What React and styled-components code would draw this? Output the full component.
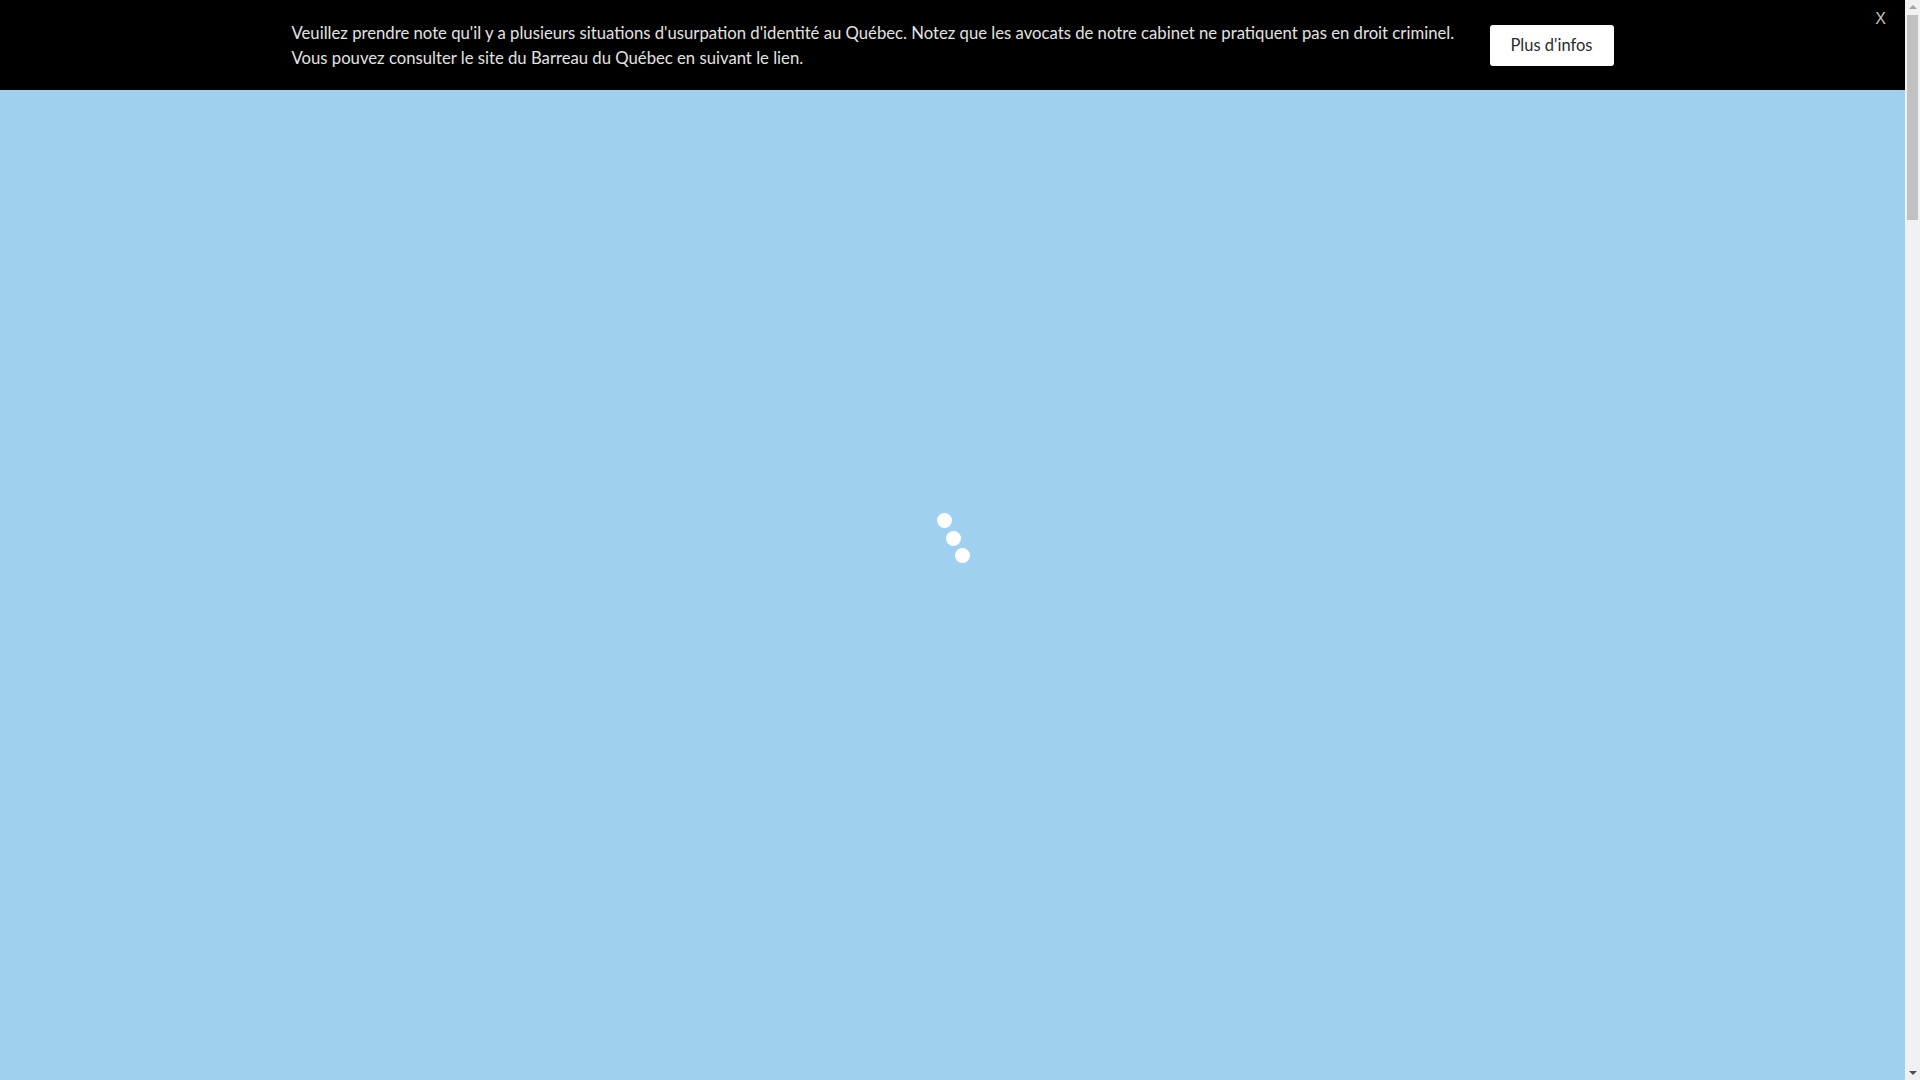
import styled, { createGlobalStyle } from 'styled-components';

const GlobalStyle = createGlobalStyle`
    html, body {
        margin: 0;
        padding: 0;
        overflow: hidden;
    }
    body {
        background-color: #a0d0ef;
        font-family: Lato, "Open Sans", "Liberation Sans", sans-serif;
    }
`;

export default function App() {
    return (
        <>
            <GlobalStyle />
            <Window>
                <Main>
                    <Banner>
                        <BannerInner>
                            <Notice>
                                Veuillez prendre note qu'il y a plusieurs situations d'usurpation d'identité au Québec. Notez que les avocats de notre cabinet ne pratiquent pas en droit criminel.
                                <br />
                                Vous pouvez consulter le site du Barreau du Québec en suivant le lien.
                            </Notice>
                            <InfoButton>Plus d'infos</InfoButton>
                        </BannerInner>
                        <CloseButton aria-label="Fermer">X</CloseButton>
                    </Banner>
                    <Content />
                    <Loader>
                        <Dot $shift={0} />
                        <Dot $shift={9} />
                        <Dot $shift={18} />
                    </Loader>
                </Main>
                <ScrollTrack>
                    <Arrow $up />
                    <Thumb />
                    <Spacer />
                    <Arrow />
                </ScrollTrack>
            </Window>
        </>
    );
}

const Window = styled.div`
    display: flex;
    height: 100vh;
`;

const Main = styled.div`
    position: relative;
    flex: 1;
    display: flex;
    flex-direction: column;
`;

const Banner = styled.header`
    position: relative;
    height: 90px;
    flex-shrink: 0;
    background-color: #000000;
    display: flex;
    justify-content: center;
    align-items: center;
`;

const BannerInner = styled.div`
    width: 1322px;
    display: flex;
    align-items: center;
    gap: 30px;
`;

const Notice = styled.p`
    flex: 1;
    min-width: 0;
    margin: 0;
    padding-top: 2px;
    font-size: 16.7px;
    font-weight: 400;
    line-height: 25px;
    color: #e2e2e2;
    white-space: nowrap;
`;

const InfoButton = styled.button`
    width: 124px;
    height: 41px;
    flex-shrink: 0;
    border: none;
    border-radius: 3px;
    background-color: #ffffff;
    color: #2b2b2b;
    font-family: inherit;
    font-size: 16.5px;
    cursor: pointer;
`;

const CloseButton = styled.button`
    position: absolute;
    top: 9px;
    right: 19px;
    border: none;
    background: none;
    padding: 0;
    color: #c4c4c4;
    font-family: "Liberation Sans", sans-serif;
    font-size: 16px;
    line-height: 20px;
    cursor: pointer;
`;

const Content = styled.main`
    flex: 1;
    background-color: #a0d0ef;
`;

const Loader = styled.div`
    position: absolute;
    inset: 0;
    display: flex;
    flex-direction: column;
    justify-content: center;
    align-items: center;
    gap: 2.5px;
    pointer-events: none;
`;

const Dot = styled.span`
    width: 15px;
    height: 15px;
    border-radius: 50%;
    background-color: #ffffff;
    transform: translate(${(p) => p.$shift - 8}px, -2px);
`;

const ScrollTrack = styled.div`
    width: 15px;
    flex-shrink: 0;
    background-color: #f1f1f1;
    display: flex;
    flex-direction: column;
    align-items: center;
`;

const Arrow = styled.div`
    width: 0;
    height: 0;
    margin: 5px 0;
    border-left: 4px solid transparent;
    border-right: 4px solid transparent;
    ${(p) => (p.$up
        ? 'border-bottom: 4px solid #a3a3a3;'
        : 'border-top: 4px solid #505050;')}
`;

const Thumb = styled.div`
    width: 11px;
    height: 205px;
    margin-top: 1px;
    background-color: #c1c1c1;
`;

const Spacer = styled.div`
    flex: 1;
`;
